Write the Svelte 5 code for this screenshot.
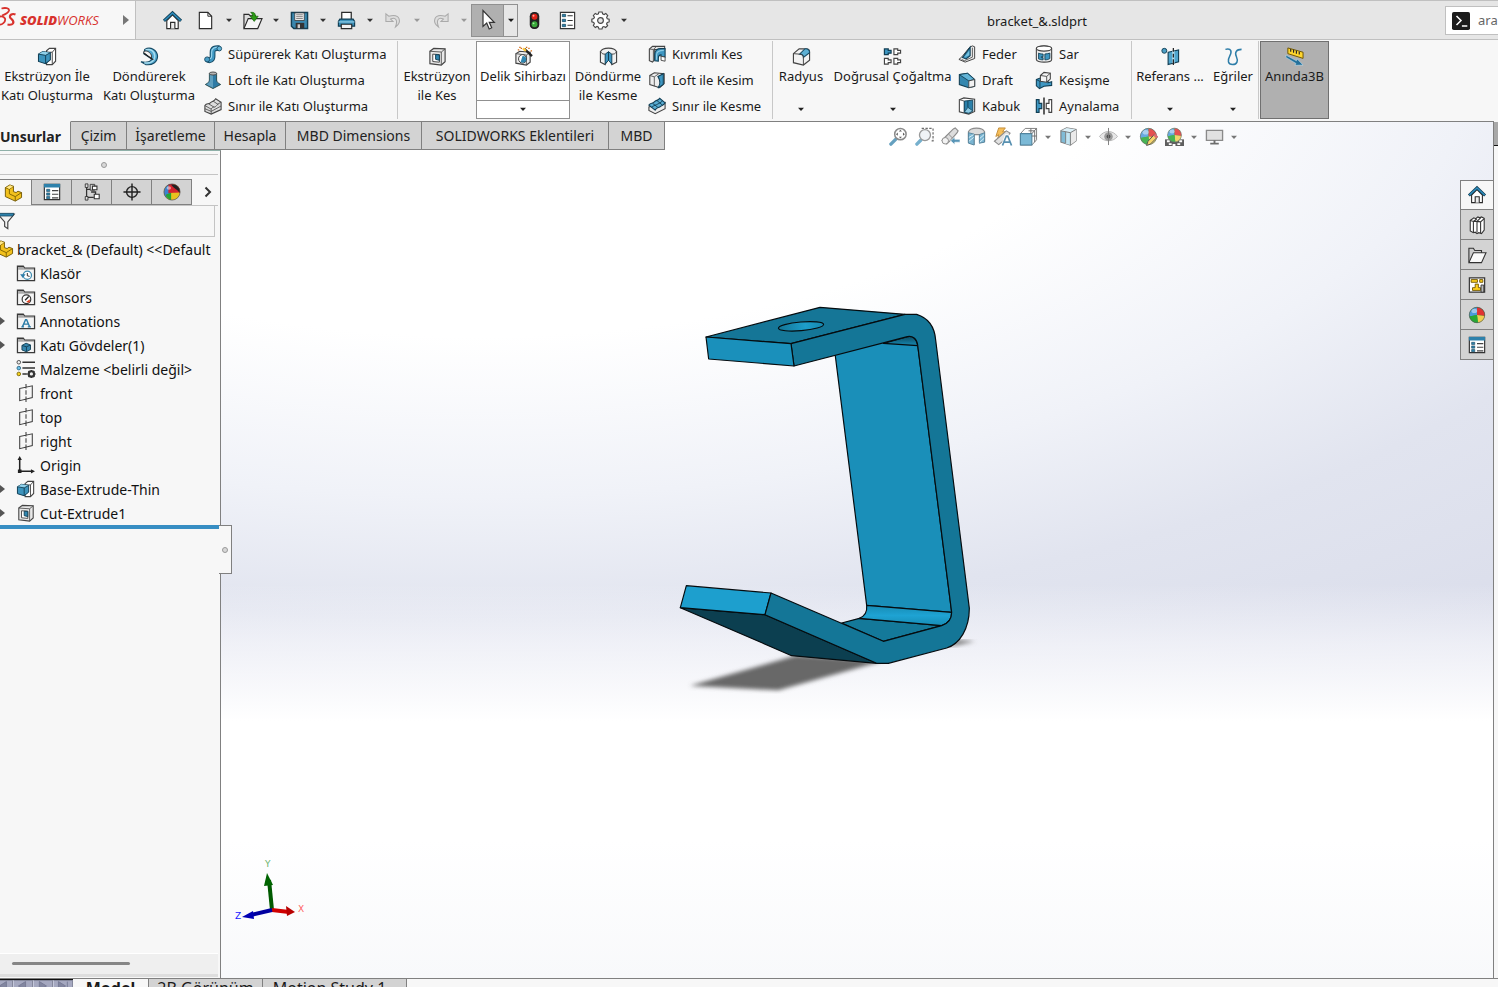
<script>
  const ink = '#2b2b2b';
  const ball = `<circle cx="10" cy="10" r="8.6" fill="#1aa32c"/><path d="M10 10V1.4A8.6 8.6 0 0 0 1.6 11.6Z" fill="#4d9bdc"/><path d="M10 10V1.4A8.6 8.6 0 0 1 18.5 11Z" fill="#e03434"/><path d="M10 10l8.5 1A8.6 8.6 0 0 1 11 18.5Z" fill="#f0d052"/><path d="M1.6 11.6L10 10l1 8.5A8.6 8.6 0 0 1 1.6 11.6Z" fill="#28a836"/><ellipse cx="7" cy="5.5" rx="3.2" ry="2.4" fill="#fff" opacity=".45"/><circle cx="10" cy="10" r="8.6" fill="none" stroke="#555" stroke-width=".7"/>`;
  const folder = `<path d="M.5 18.500V2.500h6.500l1.500 2h11v14z" fill="#f4f4f4" stroke="#3a3a3a" stroke-width="1.400"/><path d="M1.200 6.500V3.200h5.500l1.400 2h10.800v1.300z" fill="#aaa"/>`;
  const extrude = `<path d="M9 4l3-2.5h6.5V15L15 18.5H9z" fill="#fff" stroke="#444" stroke-width="1.2"/><path d="M15 18V5.500l3.500-4M15 5.500H9" fill="none" stroke="#444"/><path d="M.5 7.500l4.500-2.700 8 1.200v7.500L8 17.500l-7.500-2.300z" fill="#3d94bd" stroke="#123f55" stroke-width="1.1"/><path d="M.5 7.500l4.500-2.700 8 1.200-5 2.800z" fill="#8fd0ea"/><path d="M.5 7.500l7.500 1.300 5-2.800M8 8.800V17.500" fill="none" stroke="#123f55"/>`;
  const cutExtrude = `<path d="M2 4.5L6 1.5l12 .5v13.5L14 19 2 17.500z" fill="#e9e9e9" stroke="#444" stroke-width="1.2"/><path d="M2 4.5l12 .8L18 2M14 5.300V19" fill="none" stroke="#555"/><path d="M5 7.500l7 .5v8l-7-.7z" fill="#fff" stroke="#444"/><path d="M8 8l4 .3v5.700L8 13z" fill="#2f86b0" stroke="#123f55"/>`;
  const plane = `<path d="M3 5l14-3v13L3 18.500zM10 0v5m0 2v5m0 2v6" fill="none" stroke="#444" stroke-width="1.2"/>`;
  const part = `<path d="M1.500 4l5-3 4 1.500v6l3 1 2-1.500 4 1.500v5.500L12.500 19l-11-5z" fill="#f2c11d" stroke="#6d5300" stroke-width="1"/><path d="M1.500 4l4.500 2 4.500-3.500M6 6v5l6.500 3 7-4.500M12.500 14v5" fill="none" stroke="#7b5f00"/><path d="M2.500 4L7 1.500l3 1.200L6 5.500z" fill="#ffe78a"/>`;
  const house = `<path d="M4 10v8.500h12V10l-6-6z" fill="#fff" stroke="${ink}" stroke-width="1.2"/><path d="M8 18.500V12h4.500v6.500" fill="#eee" stroke="${ink}" stroke-width="1.2"/><path d="M1 10.500L10 2l9 8.500" fill="none" stroke="#123f55" stroke-width="3.200"/><path d="M1.500 10L10 2.200l8.500 7.800" fill="none" stroke="#2f8fc0" stroke-width="1.500"/>`;
  const list = `<path d="M1.500 1.500h17v17h-17z" fill="#fff" stroke="#333" stroke-width="1.300"/><path d="M1 1h18v4H1z" fill="#2d81ab"/><path d="M4 7h3.500v2.500H4zM4 11h3.500v2.500H4zM4 15h3.500v2.500H4z" fill="#2d81ab" stroke="#123f55" stroke-width=".6"/><path d="M10 8.500h7M10 12.500h7M10 16.500h7" stroke="#444" stroke-width="1.200"/>`;

  const icons = {
    home: house, ball, extrude, cutExtrude, plane, part, list,
    blank: `<path d="M3.500 1.500h9l4 4v13h-13z" fill="#fff" stroke="${ink}" stroke-width="1.200"/><path d="M12.500 1.500v4h4" fill="none" stroke="${ink}"/>`,
    open: `<path d="M1 18V3.500h5L7.500 5H13v4" fill="#ddd" stroke="${ink}" stroke-width="1.200"/><path d="M1 18.500L5.500 8H20l-4.500 10.500z" fill="#f6f6f6" stroke="${ink}" stroke-width="1.200"/><path d="M8 1.500c4-.5 5 1 5 4h3L11.800 11 7.500 5.500h2.500c0-2-.3-3-2-4z" fill="#2b9c14" stroke="#17600a" stroke-width=".7"/>`,
    save: `<path d="M1.500 1.500h17v17H4l-2.500-2.500z" fill="#3987ae" stroke="#123f55" stroke-width="1.500"/><path d="M5 2h10v8H5z" fill="#f5f5f5" stroke="#333" stroke-width=".8"/><path d="M6.500 4h7M6.500 6h7M6.500 8h7" stroke="#777"/><path d="M6 12.500h9v6H6z" fill="#333"/><path d="M8 14h2.500v4H8z" fill="#ccc"/>`,
    print: `<path d="M5 9V1.500h10V9" fill="#fff" stroke="${ink}" stroke-width="1.300"/><path d="M3 8.500h14l1.500 2.500V16h-17v-5z" fill="#3b91ba" stroke="#123f55" stroke-width="1.300"/><path d="M1.500 11.500h17" stroke="#a7dcf0"/><path d="M4.500 14h11v4.500h-11z" fill="#f2f2f2" stroke="${ink}" stroke-width="1.200"/>`,
    undo: `<path d="M2 3v8h7.500L7 8.500c5-2.500 8 1 5 8.500 7-5 5.500-15-7-11.500z" fill="#ddd" stroke="#aaa" stroke-width="1.100"/>`,
    redo: `<path d="M18 3v8h-7.500L13 8.500c-5-2.500-8 1-5 8.500C1 12 2.500 2 15 5.500z" fill="#ddd" stroke="#aaa" stroke-width="1.100"/>`,
    cursor: `<path d="M5 .5v16l3.700-3.400 2.500 5.900 2.500-1.200-2.400-5.500h5z" fill="#fff" stroke="#333" stroke-width="1.200"/>`,
    traffic: `<rect x="5" y="1" width="10" height="18" rx="4.500" fill="#222"/><circle cx="10" cy="6" r="3.100" fill="#e02318"/><circle cx="10" cy="14" r="3.100" fill="#39a93a"/><circle cx="9" cy="5" r="1" fill="#ffaaa0"/><circle cx="9" cy="13" r="1" fill="#a5eaa2"/>`,
    props: `<path d="M2.500 1.500h15v17h-15z" fill="#fff" stroke="#333" stroke-width="1.200"/><path d="M4.500 3.500H8V6H4.500zM4.500 8.700H8v2.500H4.500zM4.500 14H8v2.500H4.500z" fill="#2d81ab" stroke="#123f55" stroke-width=".7"/><path d="M10 5h5.500M10 10h5.500M10 15h5.500" stroke="#333" stroke-width="1.200"/>`,
    gear: `<path d="M8.300 1h3.400l.5 2 1.600.7 1.800-1.100 2 2.200-1.100 1.800.6 1.500 2 .5v2.900l-2 .6-.7 1.500 1.100 1.800-2.100 2-1.800-1-1.500.6-.5 2H8.400l-.6-2-1.500-.7-1.800 1.100-2-2.100 1-1.800-.6-1.500-2-.5V8.600l2-.6.7-1.500-1.100-1.800 2-2.100 1.800 1 1.500-.6z" fill="#fff" stroke="#444" stroke-width="1.200"/><circle cx="10" cy="10" r="3" fill="#e6e6e6" stroke="#444" stroke-width="1.200"/>`,
    revolve: `<path d="M5 2.500C11-1 18 3 18.500 9.500 18.500 16 13 19.500 6 18.500L1 15.500c7 1.500 11-.5 11-3L4 7z" fill="#4fa5cd" stroke="#174b65" stroke-width="1.200"/><path d="M6 3c5-1.500 9.500 1.500 9.500 6.500 0 6-5 8-11 7" fill="none" stroke="#a6ddf0" stroke-width="1.600"/><path d="M3.500 5.500c2-2.500 6-1.500 8.500 3v4z" fill="#f3f3f3" stroke="#333"/><path d="M4 6.500l10 7" stroke="#222" stroke-width="1.200"/>`,
    sweep: `<path d="M3.500 16c3 2 6 .5 6-3.500V8c0-4 3-5 7.500-4.500" fill="none" stroke="#174b65" stroke-width="6.400"/><path d="M3.500 16c3 2 6 .5 6-3.500V8c0-4 3-5 7.500-4.500" fill="none" stroke="#3f97c2" stroke-width="4.200"/><path d="M4 15c3 1 4.500 0 4.500-3V8c0-4 3-6 8-5.500" fill="none" stroke="#9cd7ee" stroke-width="1.200"/><circle cx="17" cy="4" r="2.600" fill="#62b3d6" stroke="#174b65"/><circle cx="3.500" cy="16" r="2.800" fill="#4a9fc7" stroke="#174b65"/>`,
    loft: `<path d="M6 2.500h8V10c0 2 1.500 3.500 4.500 5L10 19.500 1.500 15C4.500 13.500 6 12 6 10z" fill="#2f7ba5" stroke="#244" stroke-width="1"/><path d="M6.500 3H10v15.500l-7.500-3.700C6 13 6.500 12 6.500 10z" fill="#5f9fbe"/><ellipse cx="10" cy="2.800" rx="4" ry="1.700" fill="#b4b4b4" stroke="#444"/>`,
    boundary: `<path d="M1 9.500c2-3 4-1 6-3s4-1 6-4.500l6 4V14L8 19l-7-3z" fill="#ddd" stroke="#444" stroke-width="1.200"/><path d="M1 9.500l7 4c2-4 4-1 6-4s3-2 5-4M8 13.500V19M5 7.500l6.500 4M10 4.500l6 4M1 13l7 3 11-6" fill="none" stroke="#555"/>`,
    boundaryCut: `<path d="M1 11v4l7 3.500L19 13V6z" fill="#eee" stroke="#444" stroke-width="1.200"/><path d="M1 9c2-3 4-1 6-3.500s4-1 6-4l6 5c-2 3-3 2-5 4s-4 0-6 4z" fill="#58acd2" stroke="#123f55" stroke-width="1.200"/><path d="M5 7l6 4.500M10 4l6 5M4 11.500c3-3 8-3 12-7" fill="none" stroke="#123f55"/>`,
    wizard: `<path d="M2 7l4-2.500 11 1V16l-4 3-11-2z" fill="#ececec" stroke="#444" stroke-width="1.200"/><path d="M2 7l11 1.500 4-3M13 8.500V19" fill="none" stroke="#555"/><ellipse cx="9" cy="12.500" rx="4.200" ry="4.500" fill="#fff" stroke="#333"/><path d="M9 9.500a3.500 3.500 0 1 1-2 6z" fill="#2f86b0"/><path d="M10 2.500l8 8 1.800-1.800-8-7.700z" fill="#222"/><path d="M9.500 1.500l3 2.500" stroke="#ffc83c" stroke-width="2.500"/><path d="M4 3h1.500M7 1.500h1.500M15 1.500h1.500M17.500 4H19M5.500 .5H7M12.500 .500H14" stroke="#d66c17" stroke-width="1.300"/>`,
    revCut: `<path d="M1.500 5C4 0 16 0 18.500 5v11l-5 2.500L10 8l-3.500 10.500-5-2.500z" fill="#f1f1f1" stroke="#444" stroke-width="1.200"/><path d="M6.500 18V7.500L10 5v9zM13.500 18V7.500L10 5v9z" fill="#3f97c2" stroke="#123f55"/><path d="M1.500 5c2 2.500 3 2.500 5 2.500M13.500 7.500c2 0 3.500 0 5-2.500" fill="none" stroke="#444"/>`,
    sweepCut: `<path d="M1.500 4.500l3.500-3h13.500V5H7v11.500L5 19l-3.500-1.500z" fill="#e4e4e4" stroke="#444" stroke-width="1.200"/><path d="M1.500 4.500L6 5l3-3M6 5v13" fill="none" stroke="#555"/><path d="M7.500 17.500V10c0-4 3-6 6.500-6H19v9.500l-4.500-1V11c-2 0-3 2-3 4v3z" fill="#3f97c2" stroke="#123f55" stroke-width="1.200"/><path d="M9.500 16.500V11c0-3 2-5 8-5" fill="none" stroke="#8ccbe5" stroke-width="1.200"/><path d="M14.500 12.500l4.500 1V18l-4.500-1z" fill="#fff" stroke="#444"/>`,
    loftCut: `<path d="M2 5l5-3 11 1v11l-5 4.500L2 15z" fill="#eee" stroke="#444" stroke-width="1.200"/><path d="M2 5l5 1.500L12 3M7 6.500V17" fill="none" stroke="#555"/><path d="M11 6l6-3v12l-6 4c3-4 3-8 0-13z" fill="#3f97c2" stroke="#123f55" stroke-width="1.200"/>`,
    fillet: `<path d="M1.500 7l6-5h7c3 0 4 1 4 3v9L12 19 1.500 16.500z" fill="#f2f2f2" stroke="#444" stroke-width="1.200"/><path d="M8 7.500l5.500-5.500c3-.5 5 1 5 4L12 11c0-2-1-3.500-4-3.500z" fill="#5db0d4" stroke="#174b65" stroke-width="1.100"/><path d="M1.500 7l6.500.5c3 0 4 1.500 4 3.500v8" fill="none" stroke="#444"/>`,
    pattern: `<path d="M1.500 2v6h4V6.500h3v-3h-3V2z" fill="#3f97c2" stroke="#123f55" stroke-width="1.300"/><g fill="#fff" stroke="#444" stroke-width="1.200"><path d="M11.500 2v6h4V6.500h3v-3h-3V2z"/><path d="M1.500 12v6h4v-1.500h3v-3h-3V12z"/><path d="M11.500 12v6h4v-1.500h3v-3h-3V12z"/></g>`,
    rib: `<path d="M13 2.500l3-1.500 2.500 1v13L8 19l-7-3 3-2.500z" fill="#eee" stroke="#444" stroke-width="1.100"/><path d="M16 3v10.500L7 17.500l-3-1.500" fill="none" stroke="#555"/><path d="M5 14L13.500 2.500V12L9 15.500z" fill="#3f97c2" stroke="#123f55" stroke-width="1.200"/><path d="M7 13.500l5.500-7v5z" fill="#77c1de"/>`,
    draft: `<path d="M1.500 4l9-1.500 8 7V17L12 18.500 1.500 15z" fill="#3587af" stroke="#123f55" stroke-width="1.200"/><path d="M1.500 4l9-1.500 8 7-6.500 1.500z" fill="#62b4d7" stroke="#123f55"/><path d="M12 11l6.500-1.500V17L12 18.500z" fill="#f2f2f2" stroke="#444"/>`,
    shell: `<path d="M1.500 3l5-2 12 1.500V16L12 19 1.500 16.500z" fill="#fff" stroke="#444" stroke-width="1.200"/><path d="M1.500 3L7 4.500v13" fill="none" stroke="#555"/><path d="M7 4.500l9.500-1v12L12 18l-5-1z" fill="#2b80aa" stroke="#123f55"/><path d="M11 11.500l5.500 4L12 18l-5-1z" fill="#8ccbe5" stroke="#123f55" stroke-width=".8"/><path d="M11 4.200v7.300" stroke="#123f55"/>`,
    wrap: `<path d="M1.500 4c0-4 17-4 17 0v12c0 4-17 4-17 0z" fill="#eee" stroke="#444" stroke-width="1.200"/><ellipse cx="10" cy="4" rx="8.500" ry="2.800" fill="#fff" stroke="#444" stroke-width="1.200"/><path d="M4 9c2 1 3 1 5 1v3H7v1h2v2.500c-2 0-4-.5-5-1zM11 10c2 0 4-.5 5.500-1v6c-1.500 1-3 1.500-5.500 1.500z" fill="#3f97c2" stroke="#123f55"/>`,
    intersect: `<path d="M1.500 9.500l5-2 8 1.500v4l4-1v4L10 17l-5 2.500-3.500-3z" fill="#3f97c2" stroke="#123f55" stroke-width="1.200"/><path d="M1.500 9.500l4 2V19" fill="none" stroke="#123f55"/><path d="M6 5l4-3.500 7 1V9l-4 3.500-7-1z" fill="#f4f4f4" stroke="#444" stroke-width="1.200"/><path d="M6 5l7 1 4-3.500M13 6v6.500" fill="none" stroke="#444"/>`,
    mirror: `<path d="M1.500 3v14h3v-4h3V7h-3V3z" fill="#3f97c2" stroke="#123f55" stroke-width="1.300"/><path d="M18.500 3v14h-3v-4h-3V7h3V3z" fill="#fff" stroke="#444" stroke-width="1.300"/><path d="M10 .5v19" stroke="#222" stroke-width="1.600"/>`,
    reference: `<circle cx="3.500" cy="4" r="2.600" fill="#4b9fc6" stroke="#123f55"/><path d="M7.500 5.500l11-2.500v12.500l-11 3z" fill="#4fa5cd" stroke="#123f55" stroke-width="1.200"/><path d="M13 4v13" stroke="#b9e1f1" stroke-width="2.400"/><path d="M13 1v4m0 2v4m0 2v6" stroke="#222" stroke-width="1.300"/>`,
    curves: `<path d="M1.500 2.500C8 1 8.500 5 6 9.500 3.500 14 4 18.500 9 18.500s6-4 4-8.500 0-7.500 5.500-7.500" fill="none" stroke="#2d7da8" stroke-width="1.600"/>`,
    instant: `<path d="M3 1l16 4.500V12L3 7z" fill="#ffd62e" stroke="#6d5300" stroke-width="1"/><path d="M6 2v3M9 3v3M12 4v3M15 5v3" stroke="#222" stroke-width="1.200"/><path d="M1 8.500l11 6 .8-2L19 19l-8.500.3 1-2L1 11z" fill="#23709b" stroke="#bde0ef" stroke-width=".6"/>`,
    zoomFit: `<path d="M2 18l5-5" stroke="#4b90b5" stroke-width="3.600" stroke-linecap="round"/><circle cx="12" cy="7.500" r="6" fill="#fff" stroke="#777" stroke-width="1.600"/><path d="M12 2.800l1.600 2h-3.200zM12 12.200l1.600-2h-3.200zM7.300 7.500l2-1.600v3.200zM16.700 7.500l-2-1.600v3.200z" fill="#444"/>`,
    zoomArea: `<path d="M2 18l4-4" stroke="#5fa3c5" stroke-width="3.600" stroke-linecap="round"/><path d="M7 1.500h12v13h-3" fill="none" stroke="#555" stroke-width="1.300" stroke-dasharray="2.500 1.500"/><circle cx="10.500" cy="8.500" r="5.800" fill="#eef2f5" stroke="#888" stroke-width="1.400"/>`,
    prevView: `<path d="M1 14l4-4 8-8 2-1 3 3-1 2-7 8-4 4z" fill="#d8d8d8" stroke="#777" stroke-width="1.200"/><circle cx="4.500" cy="14.500" r="3.400" fill="#f2f2f2" stroke="#777"/><path d="M8 7.500l4.500 4.500" stroke="#777"/><path d="M10 14.500l4.500-4v2.500H20v3h-5.500v2.500z" fill="#3b83aa" stroke="#fff" stroke-width=".6"/>`,
    section: `<path d="M1.500 5C4 0 16 0 18.500 5v10l-5 1.500V8h-6v10l-6-2z" fill="#d5d5d5" stroke="#777" stroke-width="1.200"/><path d="M1.500 6l6 1.500V19l-6-2zM13 8l5.500-2v10L13 17z" fill="#63a9cb" stroke="#3b708c"/><path d="M2 11l5-3M2 15l5-4M13.500 12l4.500-4M13.500 16l4.500-4" stroke="#d7eef7"/>`,
    annotate: `<path d="M3 10L6 1h7l-3 4h4L5 12l1-4z" fill="#f5b33c" stroke="#b97a17"/><path d="M1.500 15L14 4l4 2.500-7 8L6 18.500z" fill="#ddd" stroke="#777" stroke-width="1.100"/><path d="M10 19.500l4-10h1.500l4 10M11.500 16h6.500" fill="none" stroke="#fff" stroke-width="3.500"/><path d="M10 19.500l4-10h1.500l4 10M11.500 16h6.500" fill="none" stroke="#3a7da3" stroke-width="1.800"/>`,
    orient: `<path d="M6.500 1.500h12v12l-5 5.500h-12V7z" fill="#fff" stroke="#666"/><path d="M1.500 7h12v12h-12z" fill="#65add0" stroke="#33708f" stroke-width="1.200"/><path d="M13.500 7l5-5.500M10 4h6.500v12M12.500 1.500V7M13.500 9.500h5" fill="none" stroke="#555"/>`,
    display: `<path d="M2 4l6-3 10 1.500v12L12 19 2 16z" fill="#6bb0d0" stroke="#666" stroke-width="1.200"/><path d="M2 4l6-3 10 1.500L12 6z" fill="#d7eef7"/><path d="M12 6l6-3.500v12L12 19z" fill="#e7e7e7"/><path d="M7 5v12.500l5 1.500V6z" fill="#b9e1f1"/><path d="M2 4l10 2 6-3.500M12 6v13M7 5v12" fill="none" stroke="#666"/>`,
    eye: `<path d="M.5 10c5-7 14-7 19 0-5 6-14 6-19 0z" fill="#e4e4e4" stroke="#aaa"/><circle cx="10" cy="10" r="4.500" fill="#8a8a8a"/><circle cx="10" cy="10" r="2" fill="#333"/><path d="M10 1v18" stroke="#666"/>`,
    ballEdit: ball + `<path d="M8 19.500l1.500-4.500 7-7.500 3 3-7.500 7.500z" fill="#f5cf54" stroke="#333"/><path d="M15 9l3 3 2-2-3-3z" fill="#d8545b"/>`,
    ballScene: `<path d="M0 13h20v7H0z" fill="#444"/><path d="M2 14h3v2H2zM8 18h3v2H8zM15 14h3v2h-3zM4 17h3v2H4zM13 17h3v2h-3z" fill="#fff"/><g transform="translate(1.500) scale(.85)">${ball}</g>`,
    monitor: `<path d="M1.500 3.500h17V14h-17z" fill="#ddd" stroke="#777" stroke-width="1.400"/><path d="M9 14h2v3H9z" fill="#555"/><path d="M5.500 17.500h9" stroke="#555" stroke-width="1.800"/>`,
    tree: `<path d="M4 1v18M4 7h5M4 16h8M9 10h5v3" fill="none" stroke="#333" stroke-width="1.400"/><path d="M2.500 1h3v4h-3zM2.500 15h3v4h-3zM8 1.500h5V8H8z" fill="#ddd" stroke="#333"/><path d="M10.500 3.500h5v4h-5zM12.500 12.500h5.500v5h-5.500z" fill="#fff" stroke="#333" stroke-width="1.200"/>`,
    target: `<circle cx="10" cy="10" r="6" fill="none" stroke="#222" stroke-width="1.600"/><path d="M10 .500v19M.5 10h19" stroke="#222" stroke-width="1.600"/>`,
    ballDark: `<circle cx="10" cy="10" r="9" fill="#e8c21e"/><path d="M10 1A9 9 0 0 0 4 16.500L9 10z" fill="#3c82cf"/><path d="M3 13l6-2.500V19A9 9 0 0 1 3 13z" fill="#25a433"/><path d="M6 2A9 9 0 0 1 19 10.500L6 11z" fill="#d3232d"/><path d="M9 2c6-2 11 4 9.500 9C17 8 12 6 9 2z" fill="#222"/><ellipse cx="6.500" cy="5.500" rx="2.500" ry="2" fill="#fff" opacity=".5"/><circle cx="10" cy="10" r="9" fill="none" stroke="#444" stroke-width=".7"/>`,
    funnel: `<path d="M1 2.500h18L12 11v7.500L8.500 16v-5z" fill="#f3f3f3" stroke="#444" stroke-width="1.300"/><path d="M1 1.500h18l-1.500 3H2.500z" fill="#2d81ab" stroke="#123f55" stroke-width=".8"/>`,
    history: folder + `<circle cx="11.500" cy="12.500" r="4.600" fill="#fff" stroke="#3d8bb0" stroke-width="1.400"/><path d="M11.500 10v3l2.500 1" fill="none" stroke="#444" stroke-width="1.200"/><path d="M3.500 11.500h6l-3 4z" fill="#2d7da8"/>`,
    sensors: folder + `<circle cx="10.500" cy="12.500" r="4.800" fill="#fff" stroke="#333" stroke-width="1.300"/><path d="M10 15.500l4.500-3-.5 4z" fill="#e04020"/><path d="M9 13.500l4-4" stroke="#222" stroke-width="1.500"/>`,
    notes: folder + `<path d="M6 16.500l3.500-8h1.200l3.300 8M7.300 13.500h5M4.800 16.500h3M12 16.500h3.500" fill="none" stroke="#2d7da8" stroke-width="1.600"/>`,
    bodies: folder + `<path d="M5.500 10.500L10 8l5 2v5l-4.500 2.500-5-2z" fill="#3587af" stroke="#123f55"/><path d="M5.500 10.500l5 1.500 4.500-2M10.500 12v5.500" fill="none" stroke="#123f55"/>`,
    material: `<circle cx="2" cy="2.500" r="2" fill="#eee" stroke="#444"/><circle cx="2" cy="9" r="2" fill="#6cc0e8" stroke="#2b6584"/><circle cx="2" cy="15.500" r="2" fill="#f5d11e" stroke="#7c6604"/><path d="M6 2.500h14M6 9h14M6 15.500h5" stroke="#333" stroke-width="1.700"/><circle cx="16" cy="15.500" r="3" fill="#eee" stroke="#333" stroke-width="2.400"/><path d="M16 11v1.500M16 18.500V20M11.500 15.500H13M19 15.500h1.500M12.700 12.300l1.300 1.200M18 17.500l1.300 1.200M12.700 18.700l1.300-1.200M18 13.500l1.300-1.200" stroke="#333" stroke-width="1.700"/>`,
    origin: `<path d="M3 3v14h14" fill="none" stroke="#222" stroke-width="1.700"/><path d="M3 0l2.400 4.500H.600zM20 17l-4.500 2.400v-4.800zM1 15h4v4H1z" fill="#222"/>`,
    books: `<path d="M2.500 5l4-3 2 1 2.500-2 2 1 2-1 3 1.500v13l-3 4-3-1-2 1-2-1.500-2 .5-3.500-2z" fill="#fff" stroke="#333" stroke-width="1.200"/><path d="M6 6v12M10 6v12M14 6.500v12.500M2.500 5L6 6l4-3M6 6l4 0 4-4M10 6l4 .500L18 3" fill="none" stroke="#333" stroke-width="1.200"/>`,
    folderOpen: `<path d="M1 18V2.500h5L7.500 5H15v4" fill="#ccc" stroke="#333" stroke-width="1.200"/><path d="M1 18.500L6 7.500h14l-5 11z" fill="#fafafa" stroke="#333" stroke-width="1.200"/>`,
    palette: `<path d="M1.500 2h17v16h-17z" fill="#fff" stroke="#333" stroke-width="1.300"/><path d="M3.500 4h7v3h-7zM13 4h3.500v3H13zM8 9h3.500v4H14v3H5v-3h3z" fill="#ffd21e" stroke="#6d5300"/><path d="M14.500 10h3v8h-3z" fill="#bbb" stroke="#333"/>`,
    caret: `<path d="M5 8h10l-5 5.500z" fill="currentColor"/>`,
    prompt: `<rect width="20" height="20" rx="2" fill="#1c1c1c"/><path d="M5 4.500l5 5-5 5M11 15.500h6" fill="none" stroke="#fff" stroke-width="1.700"/>`
  };

  const quick = ['home', 'blank', '>', 'open', '>', 'save', '>', 'print', '>', 'undo', '>d', 'redo', '>d'];
  const groups = [
    { cls: 'g1', cells: [
      { icon: 'extrude', lines: ['Ekstrüzyon İle', 'Katı Oluşturma'] },
      { icon: 'revolve', lines: ['Döndürerek', 'Katı Oluşturma'] },
      { rows: [['sweep', 'Süpürerek Katı Oluşturma'], ['loft', 'Loft ile Katı Oluşturma'], ['boundary', 'Sınır ile Katı Oluşturma']] }] },
    { cls: 'g2', cells: [
      { icon: 'cutExtrude', lines: ['Ekstrüzyon', 'ile Kes'] },
      { icon: 'wizard', lines: ['Delik Sihirbazı'], caret: true, cls: 'hot' },
      { icon: 'revCut', lines: ['Döndürme', 'ile Kesme'] },
      { rows: [['sweepCut', 'Kıvrımlı Kes'], ['loftCut', 'Loft ile Kesim'], ['boundaryCut', 'Sınır ile Kesme']] }] },
    { cls: 'g3', cells: [
      { icon: 'fillet', lines: ['Radyus'], caret: true },
      { icon: 'pattern', lines: ['Doğrusal Çoğaltma'], caret: true },
      { rows: [['rib', 'Feder'], ['draft', 'Draft'], ['shell', 'Kabuk']] },
      { rows: [['wrap', 'Sar'], ['intersect', 'Kesişme'], ['mirror', 'Aynalama']] }] },
    { cls: 'g4', cells: [
      { icon: 'reference', lines: ['Referans ...'], caret: true },
      { icon: 'curves', lines: ['Eğriler'], caret: true }] },
    { cls: 'g5', cells: [{ icon: 'instant', lines: ['Anında3B'], cls: 'pressed' }] }
  ];
  const tabs = ['Unsurlar', 'Çizim', 'İşaretleme', 'Hesapla', 'MBD Dimensions', 'SOLIDWORKS Eklentileri', 'MBD'];
  const view = ['zoomFit', 'zoomArea', 'prevView', 'section', 'annotate', 'orient', '>', 'display', '>', 'eye', '>', 'ballEdit', 'ballScene', '>', 'monitor', '>'];
  const managers = ['part', 'list', 'tree', 'target', 'ballDark'];
  const nodes = [
    ['history', 'Klasör'], ['sensors', 'Sensors'], ['notes', 'Annotations', true], ['bodies', 'Katı Gövdeler(1)', true],
    ['material', 'Malzeme <belirli değil>'], ['plane', 'front'], ['plane', 'top'], ['plane', 'right'], ['origin', 'Origin'],
    ['extrude', 'Base-Extrude-Thin', true], ['cutExtrude', 'Cut-Extrude1', true]
  ];
  const pane = ['home', 'books', 'folderOpen', 'palette', 'ball', 'list'];
  const steps = ['M14 4L6 9l8 5zM4 4v10', 'M13 4L5 9l8 5z', 'M6 4l8 5-8 5z', 'M5 4l8 5-8 5zM15 4v10'];
</script>

{#snippet icon(name)}
  <svg class="icon" viewBox="0 0 20 20" aria-hidden="true">{@html icons[name]}</svg>
{/snippet}

<div class="app">
  <header class="titlebar">
    <div class="brand">
      <svg class="mark" viewBox="0 0 16 20" aria-hidden="true">
        <path d="M1.500 1.500C5 .500 9.500 1 9 3.500 8.500 5.500 5 7.500 2 8.500" fill="none" stroke="#d8322d" stroke-width="1.800" />
        <path d="M-2 17.500C2 18.500 6 15 5 11.500 4 9.500 1 9 -2 10" fill="none" stroke="#d8322d" stroke-width="1.800" />
        <path d="M15.500 7.500C12 6 8.500 8.500 10.500 11c2 2 4 3 2.500 5.500-1 1.500-3 1.500-5.500 1" fill="none" stroke="#d8322d" stroke-width="2.200" />
      </svg>
      <span class="wordmark"><b>SOLID</b>WORKS</span>
      <button class="flyout" aria-label="Menu"><svg viewBox="0 0 6 10"><path d="M0 0l6 5-6 5z" fill="#777" /></svg></button>
    </div>
    <nav class="quick">
      {#each quick as q}
        <button class={q[0] === '>' ? 'drop' : 'tool'} class:dim={q === '>d'}>{@render icon(q[0] === '>' ? 'caret' : q)}</button>
      {/each}
      <div class="select">
        <button class="arrow">{@render icon('cursor')}</button>
        <button class="more">{@render icon('caret')}</button>
      </div>
      <button class="tool">{@render icon('traffic')}</button>
      <button class="tool wide">{@render icon('props')}</button>
      <button class="tool wide">{@render icon('gear')}</button>
      <button class="drop">{@render icon('caret')}</button>
    </nav>
    <h1>bracket_&amp;.sldprt</h1>
    <label class="search">{@render icon('prompt')}<input type="text" placeholder="ara" /></label>
  </header>

  <div class="ribbon">
    {#each groups as g}
      <div class="group {g.cls}">
        {#each g.cells as c}
          {#if c.rows}
            <div class="stack">
              {#each c.rows as [ic, label]}
                <button class="row">{@render icon(ic)}{label}</button>
              {/each}
            </div>
          {:else}
            <button class="big {c.cls ?? ''}">
              {@render icon(c.icon)}
              <span class="lines">{#each c.lines as l}<span>{l}</span>{/each}</span>
              {#if c.caret}<span class="foot">{@render icon('caret')}</span>{/if}
            </button>
          {/if}
        {/each}
      </div>
    {/each}
  </div>

  <div class="workspace">
    <div class="topline">
      <div class="tabs">
        {#each tabs as t, i}<button class="tab" class:active={i === 0}>{t}</button>{/each}
      </div>
      <div class="headsup">
        {#each view as v}
          <button class={v === '>' ? 'vdrop' : 'vtool'}>{@render icon(v === '>' ? 'caret' : v)}</button>
        {/each}
      </div>
      <div class="edge"><span></span></div>
    </div>

    <div class="main">
      <aside class="panel">
        <div class="grip"><i></i></div>
        <div class="managers">
          {#each managers as m, i}<button class:active={i === 0}>{@render icon(m)}</button>{/each}
          <button class="next" aria-label="Next"><svg viewBox="0 0 8 12"><path d="M1.500 1.500L6 6l-4.500 4.500" fill="none" stroke="#333" stroke-width="2" /></svg></button>
        </div>
        <label class="filter">{@render icon('funnel')}<input type="text" aria-label="Filter" /></label>
        <ul class="tree">
          <li class="root">{@render icon('part')}<span>bracket_&amp; (Default) &lt;&lt;Default</span></li>
          {#each nodes as [ic, label, opens]}
            <li>
              <svg class="twist" viewBox="0 0 5 8">{#if opens}<path d="M0 0l5 4-5 4z" fill="#555" />{/if}</svg>
              {@render icon(ic)}<span>{label}</span>
            </li>
          {/each}
        </ul>
        <div class="rollback"></div>
        <div class="scroll"><div class="thumb"></div></div>
        <div class="handle"><i></i></div>
      </aside>

      <main class="viewport">
        <svg class="model" viewBox="0 0 960 1230" role="img" aria-label="bracket">
          <defs>
            <filter id="soft"><feGaussianBlur stdDeviation="6" /></filter>
            <linearGradient id="bendLow" x1="0" y1="0" x2="0" y2="1"><stop offset="0" stop-color="#178bb4" /><stop offset=".5" stop-color="#1ea3d3" /><stop offset="1" stop-color="#178cb5" /></linearGradient>
            <linearGradient id="bore"><stop offset="0" stop-color="#137494" /><stop offset=".6" stop-color="#1d9ecb" /><stop offset="1" stop-color="#1687ae" /></linearGradient>
            <linearGradient id="bendTop" x1="0" y1="0" x2="0" y2="1"><stop offset="0" stop-color="#0c4a60" /><stop offset="1" stop-color="#178bb4" /></linearGradient>
          </defs>
          <path d="M60 1187L380 1096L640 1112L325 1201z" fill="#686868" filter="url(#soft)" />
          <path d="M830 1070L865 1050L915 1054L860 1066z" fill="#777" filter="url(#soft)" />
          <g stroke="#050b0e" stroke-width="3.500" stroke-linejoin="round">
            <path d="M495 190L640 152L743 165L845 967L590 946z" fill="#1a8fb9" />
            <path d="M515 999L568 985L815 1007L640 1054z" fill="#14799a" />
            <path d="M590 946L845 967C845 985 838 1000 815 1007L568 985C585 978 592 966 590 946z" fill="url(#bendLow)" />
            <path d="M640 160L743 167C740 145 728 137 712 140z" fill="url(#bendTop)" />
            <path d="M31 953L285 974L620 1120L365 1097z" fill="#0c3f50" />
            <path d="M49 887L303 909L285 974L31 953z" fill="#1d9fce" />
            <path d="M108 141L450 52L705 73L363 161z" fill="#157697" />
            <path d="M363 161L705 73L740 73C775 84 794 112 797 150L898 955C898 1015 870 1062 830 1074L655 1120H620L285 974L303 909L640 1054L815 1007C838 1000 845 985 845 967L743 165C740 145 728 137 712 140L372 228z" fill="#147697" />
            <path d="M108 141L363 161L372 228L116 207z" fill="#1a90bb" />
            <ellipse cx="393" cy="109" rx="68" ry="13" transform="rotate(-5 393 109)" fill="url(#bore)" />
          </g>
        </svg>
        <svg class="triad" viewBox="0 0 76 66" aria-hidden="true">
          <path d="M39 50L36 20" stroke="#005a00" stroke-width="4" /><path d="M31 26L34 13L40 25z" fill="#006400" />
          <path d="M39 50L56 52" stroke="#d00000" stroke-width="4" /><path d="M53 46L62 52L54 56z" fill="#b80000" />
          <path d="M39 50L18 55" stroke="#0000a0" stroke-width="4" /><path d="M9 57L20 51L21 59z" fill="#0000b4" />
          <text x="32" y="7" fill="#6cb46c">Y</text><text x="65" y="52" fill="#ff6464">X</text><text x="2" y="59" fill="#2020ff">Z</text>
        </svg>
        <div class="pane">
          {#each pane as p, i}<button class:active={i === 0}>{@render icon(p)}</button>{/each}
        </div>
      </main>
      <div class="edge"></div>
    </div>
  </div>

  <footer class="bottom">
    <div class="steps">
      {#each steps as d}<button><svg viewBox="0 0 18 18"><path {d} fill="#8286a0" stroke="#757994" /></svg></button>{/each}
    </div>
    <button class="sheet active">Model</button>
    <button class="sheet views">2B Görünüm</button>
    <button class="sheet motion">Motion Study 1</button>
  </footer>
</div>

<style>
  :global(body) { margin: 0; overflow: hidden; }
  .app {
    display: flex; flex-direction: column; height: 100vh; overflow: hidden;
    background: #f7f7f7; color: #1a1a1a; font: 13px/19px 'Segoe UI', 'Noto Sans', sans-serif;
  }
  button { margin: 0; padding: 0; border: 0; background: none; color: inherit; font: inherit; white-space: nowrap; }
  input { min-width: 0; padding: 0; border: 0; outline: 0; background: none; font: inherit; }
  svg { display: block; flex: none; }
  .icon { width: 20px; height: 20px; overflow: visible; }

  .titlebar { display: flex; align-items: stretch; flex: none; height: 38px; border-top: 1px solid #c0c0c0; border-bottom: 1px solid #c0c0c0; background: #e6e6e6; }
  .brand { display: flex; align-items: center; box-sizing: border-box; width: 136px; border-right: 1px solid #c0c0c0; background: #f7f7f7; color: #d8322d; }
  .mark { width: 16px; height: 20px; margin: 0 4px 6px 0; }
  .wordmark { flex: 1; font: italic 13px/20px 'Open Sans', sans-serif; }
  .wordmark b { font-weight: 800; }
  .flyout svg { width: 6px; height: 10px; margin-right: 6px; }
  .quick { display: flex; align-items: center; margin-left: 26px; }
  .quick .icon { margin: auto; }
  .tool { width: 20px; }
  .quick > .tool:first-child { margin-right: 13px; }
  .drop { width: 27px; color: #333; }
  .tool .icon { width: 19px; height: 19px; }
  .drop .icon, .more .icon, .foot .icon, .vdrop .icon { width: 12px; height: 12px; }
  .dim { color: #999; }
  .select { display: flex; box-sizing: border-box; height: 33px; width: 47px; margin: 0 6px 0 -6px; border: 1px solid #909090; }
  .arrow { width: 32px; border-right: 1px solid #909090; background: #b0b0b0; }
  .more { flex: 1; }
  .wide { margin-left: 13px; }
  h1 { flex: 1; margin: 0; padding: 1px 8px 0 0; font-size: 13px; line-height: 38px; font-weight: 400; text-align: center; }
  .search { display: flex; align-items: center; box-sizing: border-box; width: 53px; margin: 5px 0 4px; padding-left: 6px; gap: 8px; border: 1px solid #c0c0c0; border-right: 0; background: #fff; }
  .search .icon { width: 18px; height: 18px; }
  .search input { width: 20px; }
  .search input::placeholder { color: #666; opacity: 1; }

  .ribbon { display: flex; flex: none; height: 81px; }
  .group { display: grid; box-sizing: border-box; height: 78px; margin-top: 1px; border-right: 1px solid #c8c8c8; }
  .g1 { grid-template-columns: 94px 110px 193px; }
  .g2 { grid-template-columns: 78px 94px 76px 126px; }
  .g3 { grid-template-columns: 56px 127px 77px 98px; }
  .g4 { grid-template-columns: 76px 50px; }
  .g5 { grid-template-columns: 69px; margin-left: 1px; border: 0; }
  .big { display: flex; flex-direction: column; align-items: center; box-sizing: border-box; height: 78px; padding-top: 6px; }
  .ribbon .big > .icon { width: 19px; height: 19px; margin-bottom: 1px; }
  .lines { display: flex; flex-direction: column; align-items: center; font-size: 13px; }
  .foot { display: grid; place-items: center; align-self: stretch; height: 21px; margin-top: auto; color: #222; }
  .ribbon .hot { padding-top: 5px; border: 1px solid #909090; background: #fff; }
  .hot .foot { height: 18px; padding-bottom: 1px; box-sizing: border-box; border-top: 1px solid #909090; }
  .ribbon .pressed { padding-top: 5px; border: 1px solid #707070; background: #b0b0b0; }
  .stack { display: flex; flex-direction: column; }
  .row { display: flex; align-items: center; gap: 6px; height: 26px; }
  .row .icon { width: 18px; height: 18px; }
  .g1 .row { padding-left: 0; }
  .g2 .row, .g3 .row { padding-left: 2px; }

  .workspace {
    position: relative; display: flex; flex-direction: column; flex: 1; min-height: 0;
    background:
      linear-gradient(to bottom, rgba(255,255,255,0) 54%, rgba(250,250,253,.6) 61%, #fff 70%, #fff 84%, #f8f9fb 100%),
      radial-gradient(ellipse 92% 72% at 32% -8%, #fff 46%, #f0f2f8 72%, #e1e4ef 92%, #d9dcea 125%);
  }
  .topline { display: flex; height: 29px; flex: none; box-shadow: inset 0 1px #808080; }
  .tabs { display: grid; grid-template-columns: 71px 56px 88px 71px 136px 187px 56px; }
  .tab { box-sizing: border-box; border: 1px solid #808080; border-left: 0; background: #d3d3d3; font-size: 14px; color: #222; }
  .tab.active { border-top-color: #f7f7f7; border-bottom: 0; background: #f7f7f7; font-weight: 700; text-align: left; }
  .headsup { display: flex; flex: 1; align-items: center; justify-content: center; gap: 6px; padding: 2px 32px 0 0; }
  .vtool { display: grid; place-items: center; width: 20px; }
  .vtool .icon { width: 19px; height: 19px; opacity: .85; }
  .vdrop { width: 8px; color: #777; }
  .vdrop .icon { margin: 0 -2px; }
  .edge { box-sizing: border-box; width: 5px; flex: none; border-left: 1px solid #808080; background: #f7f7f7; }
  .edge span { display: block; height: 23px; margin-top: 1px; border-bottom: 1px solid #111; background: #a8a8a8; }
  .main { display: flex; flex: 1; min-height: 0; }

  .panel { position: relative; display: flex; flex-direction: column; box-sizing: border-box; width: 221px; padding-right: 2px; border-right: 1px solid #808080; border-top: 1px solid #8fb0a8; background: #f7f7f7; }
  .grip { display: grid; place-items: center; height: 19px; margin-top: 3px; padding-right: 10px; border-top: 1px solid #c4c4c4; border-bottom: 1px solid #c4c4c4; }
  .grip i, .handle i { box-sizing: border-box; width: 6px; height: 6px; border: 1px solid #999; border-radius: 50%; background: #d8d8d8; }
  .managers { display: grid; grid-template-columns: 32px 40px 40px 40px 40px 27px; height: 26px; margin-top: 4px; border-bottom: 1px solid #c4c4c4; }
  .managers button { display: grid; place-items: center; border: 1px solid #808080; border-left: 0; background: #d3d3d3; }
  .managers .icon { width: 18px; height: 18px; }
  .managers .active { padding-right: 6px; border-bottom: 0; background: #f7f7f7; }
  .managers .next { padding-left: 4px; border: 0; background: none; }
  .next svg { width: 8px; height: 12px; }
  .filter { display: flex; align-items: center; box-sizing: border-box; height: 31px; margin-right: 3px; border: 1px solid #c4c4c4; border-width: 0 1px 1px 0; }
  .filter .icon { width: 18px; height: 18px; margin-left: -3px; }
  .tree { margin: 0; padding: 0; list-style: none; font-size: 14px; color: #111; }
  .tree li { display: flex; align-items: center; height: 24px; white-space: nowrap; }
  .tree .icon { width: 18px; height: 18px; margin: 0 5px 0 12px; }
  .tree .root .icon { margin: 0 4px 0 -5px; }
  .twist { width: 5px; height: 8px; }
  .rollback { height: 4px; margin-right: -1px; background: #378ec3; }
  .scroll { height: 19px; margin: auto 0 1px; padding: 1px 0 0 12px; border-top: 1px solid #fff; border-bottom: 3px solid #dedede; background: #efefef; }
  .thumb { width: 118px; height: 3px; margin-top: 7px; border-radius: 2px; background: #868686; }
  .handle { position: absolute; z-index: 1; left: 219px; top: 374px; display: grid; place-items: center; box-sizing: border-box; width: 13px; height: 49px; border: 1px solid #808080; border-left: 0; background: #f7f7f7; }

  .viewport { position: relative; flex: 1; min-width: 0; }
  .model { position: absolute; left: 449px; top: 140px; width: 320px; height: 410px; overflow: visible; }
  .triad { position: absolute; left: 12px; bottom: 52px; width: 76px; height: 66px; overflow: visible; }
  .triad text { font: 9px 'DejaVu Sans', sans-serif; stroke: currentColor; stroke-width: 0; }
  .pane { position: absolute; right: 0; top: 30px; display: flex; flex-direction: column; width: 32px; border: 1px solid #808080; border-width: 1px 0 0 1px; }
  .pane button { display: grid; place-items: center; height: 30px; box-sizing: border-box; border-bottom: 1px solid #808080; background: #d3d3d3; }
  .pane .active { height: 29px; background: #f7f7f7; }
  .pane .icon { width: 18px; height: 18px; }

  .bottom { display: flex; flex: none; align-items: flex-start; height: 9px; overflow: hidden; box-sizing: border-box; border-top: 1px solid #808080; background: #f7f7f7; }
  .steps { display: flex; width: 73px; box-sizing: border-box; border-top: 1px solid #111; overflow: hidden; background: #a5a8c0; justify-content: flex-end; }
  .steps button { flex: none; width: 20px; box-sizing: border-box; border: 1px solid #85889c; border-left-color: #c4c7da; }
  .steps svg { width: 16px; height: 16px; margin-top: -3px; }
  .sheet { box-sizing: border-box; width: 76px; height: 24px; padding-bottom: 6px; border-right: 1px solid #808080; background: #d3d3d3; font-size: 16px; line-height: 18px; }
  .sheet.active { background: #f7f7f7; font-weight: 700; }
  .sheet.views { width: 114px; }
  .sheet.motion { width: 144px; padding-right: 10px; }
</style>
